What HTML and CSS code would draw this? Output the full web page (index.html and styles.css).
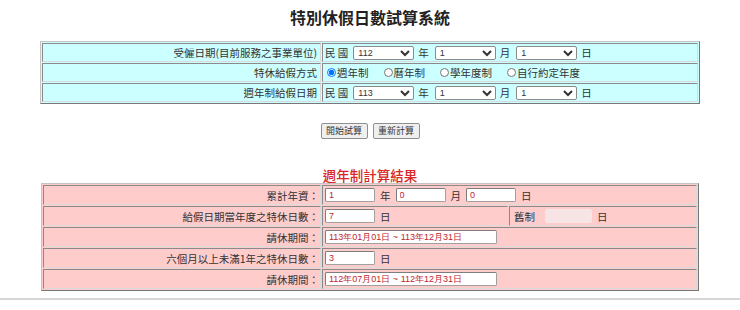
FILE: index.html
```html
<!DOCTYPE html>
<html lang="zh-Hant">
<head>
<meta charset="utf-8">
<title>特別休假日數試算系統</title>
<link rel="stylesheet" href="styles.css">
</head>
<body>
<h1 class="title">特別休假日數試算系統</h1>

<table class="grid grid-cyan">
  <colgroup><col class="col-label"><col></colgroup>
  <tr>
    <td class="label">受僱日期(目前服務之事業單位)</td>
    <td class="value"><div class="line"><span class="pre">民 國</span><select class="sel"><option>112</option></select><span class="u">年</span><select class="sel"><option>1</option></select><span class="u">月</span><select class="sel"><option>1</option></select><span class="u">日</span></div></td>
  </tr>
  <tr>
    <td class="label">特休給假方式</td>
    <td class="value"><div class="line">
      <label class="opt"><input type="radio" name="m" checked>週年制</label>
      <label class="opt"><input type="radio" name="m">曆年制</label>
      <label class="opt"><input type="radio" name="m">學年度制</label>
      <label class="opt"><input type="radio" name="m">自行約定年度</label>
    </div></td>
  </tr>
  <tr>
    <td class="label">週年制給假日期</td>
    <td class="value"><div class="line"><span class="pre">民 國</span><select class="sel"><option>113</option></select><span class="u">年</span><select class="sel"><option>1</option></select><span class="u">月</span><select class="sel"><option>1</option></select><span class="u">日</span></div></td>
  </tr>
</table>

<div class="buttons">
  <button class="btn" type="button">開始試算</button>
  <button class="btn" type="button">重新計算</button>
</div>

<h2 class="subtitle">週年制計算結果</h2>

<table class="grid grid-pink">
  <colgroup><col class="col-label2"><col class="col-mid"><col></colgroup>
  <tr>
    <td class="label">累計年資：</td>
    <td class="value" colspan="2"><div class="line"><input class="txt" type="text" value="1"><span class="u2">年</span><input class="txt" type="text" value="0"><span class="u2">月</span><input class="txt" type="text" value="0"><span class="u2">日</span></div></td>
  </tr>
  <tr>
    <td class="label">給假日期當年度之特休日數：</td>
    <td class="value"><div class="line"><input class="txt" type="text" value="7"><span class="u2">日</span></div></td>
    <td class="value"><div class="line"><span class="old">舊制</span><input class="txt txt-off" type="text" disabled><span class="u2">日</span></div></td>
  </tr>
  <tr>
    <td class="label">請休期間：</td>
    <td class="value" colspan="2"><div class="line"><input class="txt txt-long" type="text" value="113年01月01日 ~ 113年12月31日"></div></td>
  </tr>
  <tr>
    <td class="label">六個月以上未滿1年之特休日數：</td>
    <td class="value" colspan="2"><div class="line"><input class="txt" type="text" value="3"><span class="u2">日</span></div></td>
  </tr>
  <tr>
    <td class="label">請休期間：</td>
    <td class="value" colspan="2"><div class="line"><input class="txt txt-long" type="text" value="112年07月01日 ~ 112年12月31日"></div></td>
  </tr>
</table>

<div class="rule"></div>
</body>
</html>
```

FILE: styles.css
```css
html, body {
  margin: 0;
  padding: 0;
  background: #ffffff;
}
body {
  font-family: "Noto Sans CJK TC", "Liberation Sans", sans-serif;
  color: #333333;
  font-size: 10.5px;
}
.title {
  margin: 0;
  padding-top: 7px;
  height: 20px;
  line-height: 20px;
  font-size: 16px;
  font-weight: bold;
  text-align: center;
  color: #222222;
}
.grid {
  border-collapse: separate;
  border-spacing: 1px;
  table-layout: fixed;
  margin-left: auto;
  margin-right: auto;
  border: 1px solid;
  border-color: #c4c4c4 #777777 #777777 #c4c4c4;
}
.grid td {
  border: 1px solid;
  border-color: #8a8a8a #dadada #dadada #8a8a8a;
  padding: 0 2px;
  vertical-align: middle;
  white-space: nowrap;
}
.grid-cyan {
  width: 660px;
  margin-top: 14px;
  background: #ccffff;
}
.grid-cyan td {
  height: 17px;
  background: #ccffff;
}
.grid-pink {
  width: 658px;
  margin-top: 0;
  background: #ffcccc;
}
.grid-pink td {
  height: 18px;
  background: #ffcccc;
}
.col-label { width: 279px; }
.col-label2 { width: 278px; }
.col-mid { width: 186px; }
.label {
  text-align: right;
}
.grid-cyan .label { padding-right: 3px; }
.grid-pink .label { padding-right: 1px; }
.line {
  display: flex;
  align-items: center;
  height: 17px;
}
.pre {
  margin-right: 5px;
}
.sel {
  width: 61px;
  height: 14px;
  padding: 0;
  font-family: "Liberation Sans", sans-serif;
  font-size: 9px;
  color: #333333;
  border: 1px solid #8a8a8a;
  border-radius: 2px;
  background: #ffffff;
}
.u {
  margin: 0 6px 0 4px;
}
.opt {
  display: flex;
  align-items: center;
  margin-right: 13px;
}
.opt input {
  width: 9px;
  height: 9px;
  margin: 0 1px 0 2px;
}
.buttons {
  display: flex;
  justify-content: center;
  gap: 5px;
  margin-top: 19px;
}
.btn {
  width: 47px;
  height: 16px;
  padding: 0;
  font-family: "Noto Sans CJK TC", sans-serif;
  font-size: 9px;
  line-height: 14px;
  color: #333333;
  background: #efefef;
  border: 1px solid #8f8f8f;
  border-radius: 2px;
}
.subtitle {
  margin: 28px 0 0 0;
  height: 16px;
  line-height: 16px;
  font-size: 13.5px;
  font-weight: 500;
  text-align: center;
  color: #d92626;
}
.txt {
  width: 50px;
  height: 14px;
  box-sizing: border-box;
  padding: 0 3px;
  font-family: "Liberation Sans", sans-serif;
  font-size: 9px;
  color: #c0262e;
  background: #ffffff;
  border: 1px solid #a0a0a0;
  border-top-color: #7d7d7d;
  border-left-color: #7d7d7d;
  border-radius: 2px;
}
.txt-long { width: 172px; }
.txt-off {
  width: 47px;
  background: #f7e4e4;
  border-color: #f7e4e4;
}
.u2 {
  margin: 0 5px;
}
.old {
  margin: 0 10px 0 2px;
}
.rule {
  margin-top: 7px;
  height: 2px;
  background: #d6d6d6;
}
```
